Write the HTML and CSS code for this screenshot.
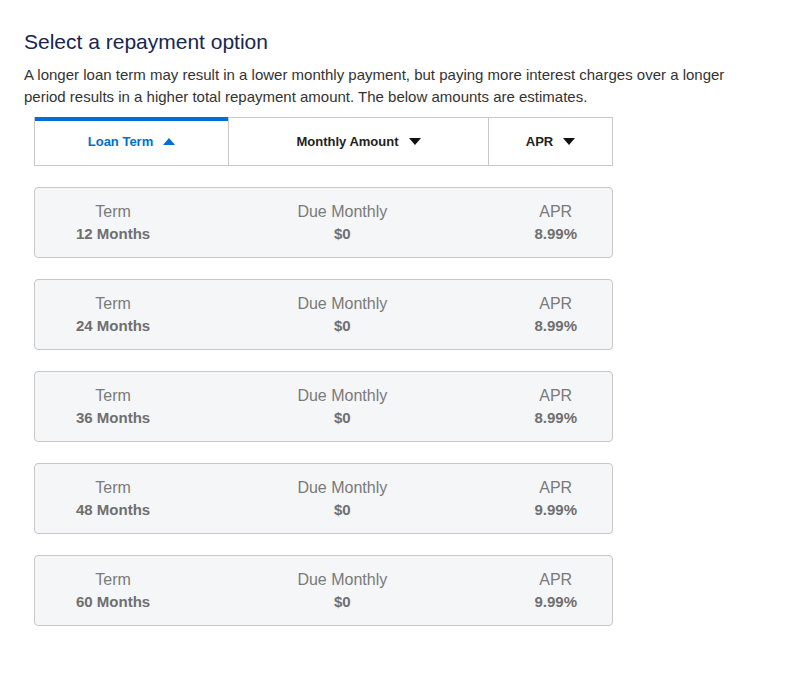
FILE: index.html
```html
<!DOCTYPE html>
<html lang="en">
<head>
<meta charset="utf-8">
<title>Select a repayment option</title>
<link rel="stylesheet" href="styles.css">
</head>
<body>
<main class="page">
  <h1 class="title">Select a repayment option</h1>
  <p class="intro">A longer loan term may result in a lower monthly payment, but paying more interest charges over a longer period results in a higher total repayment amount. The below amounts are estimates.</p>
  <div class="options">
    <div class="sortbar">
      <button class="sort sort-term active">Loan Term <span class="tri tri-up"></span></button>
      <button class="sort sort-monthly">Monthly Amount <span class="tri tri-down"></span></button>
      <button class="sort sort-apr">APR <span class="tri tri-down"></span></button>
    </div>
    <ul class="cards">
      <li class="card">
        <div class="cell"><span class="label">Term</span><span class="value">12 Months</span></div>
        <div class="cell"><span class="label">Due Monthly</span><span class="value">$0</span></div>
        <div class="cell"><span class="label">APR</span><span class="value">8.99%</span></div>
      </li>
      <li class="card">
        <div class="cell"><span class="label">Term</span><span class="value">24 Months</span></div>
        <div class="cell"><span class="label">Due Monthly</span><span class="value">$0</span></div>
        <div class="cell"><span class="label">APR</span><span class="value">8.99%</span></div>
      </li>
      <li class="card">
        <div class="cell"><span class="label">Term</span><span class="value">36 Months</span></div>
        <div class="cell"><span class="label">Due Monthly</span><span class="value">$0</span></div>
        <div class="cell"><span class="label">APR</span><span class="value">8.99%</span></div>
      </li>
      <li class="card">
        <div class="cell"><span class="label">Term</span><span class="value">48 Months</span></div>
        <div class="cell"><span class="label">Due Monthly</span><span class="value">$0</span></div>
        <div class="cell"><span class="label">APR</span><span class="value">9.99%</span></div>
      </li>
      <li class="card">
        <div class="cell"><span class="label">Term</span><span class="value">60 Months</span></div>
        <div class="cell"><span class="label">Due Monthly</span><span class="value">$0</span></div>
        <div class="cell"><span class="label">APR</span><span class="value">9.99%</span></div>
      </li>
    </ul>
  </div>
</main>
</body>
</html>
```
FILE: styles.css
```css
html, body {
  margin: 0;
  padding: 0;
  background: #ffffff;
}
body {
  font-family: "Liberation Sans", Arial, sans-serif;
  color: #333333;
}
.page {
  padding: 29px 24px 40px 24px;
}
.title {
  margin: 0;
  font-size: 21px;
  font-weight: 400;
  line-height: 26px;
  color: #152654;
}
.intro {
  margin: 9px 0 0 0;
  font-size: 15px;
  line-height: 22px;
  color: #333333;
  max-width: 720px;
}
.options {
  margin: 9px 0 0 10px;
  width: 579px;
}
.sortbar {
  box-sizing: border-box;
  display: grid;
  grid-template-columns: 193px 260px 1fr;
  border: 1px solid #c8c8c8;
  border-top: none;
  height: 49px;
}
.sort {
  display: flex;
  align-items: center;
  justify-content: center;
  gap: 10px;
  margin: 0;
  padding: 0;
  background: #ffffff;
  border: none;
  border-top: 1px solid #c8c8c8;
  font-family: "Liberation Sans", Arial, sans-serif;
  font-size: 13px;
  font-weight: 700;
  color: #222222;
}
.sort + .sort {
  border-left: 1px solid #c8c8c8;
}
.sort.active {
  color: #006fcf;
  border-top: 4px solid #006fcf;
  padding-bottom: 3px;
}
.tri {
  width: 0;
  height: 0;
  border-left: 6px solid transparent;
  border-right: 6px solid transparent;
}
.tri-up {
  border-bottom: 7px solid #006fcf;
}
.tri-down {
  border-top: 7px solid #111111;
}
.cards {
  list-style: none;
  margin: 21px 0 0 0;
  padding: 0;
  display: flex;
  flex-direction: column;
  gap: 21px;
}
.card {
  display: flex;
  justify-content: space-between;
  align-items: center;
  height: 68px;
  padding: 1px 35px 0 41px;
  box-sizing: content-box;
  background: #f5f6f8;
  border: 1px solid #c8c8c8;
  border-radius: 4px;
}
.cell {
  display: flex;
  flex-direction: column;
  align-items: center;
}
.label {
  font-size: 16px;
  line-height: 22px;
  color: #7a7a7a;
}
.value {
  font-size: 15px;
  line-height: 22px;
  font-weight: 700;
  color: #6f6f6f;
}
```
